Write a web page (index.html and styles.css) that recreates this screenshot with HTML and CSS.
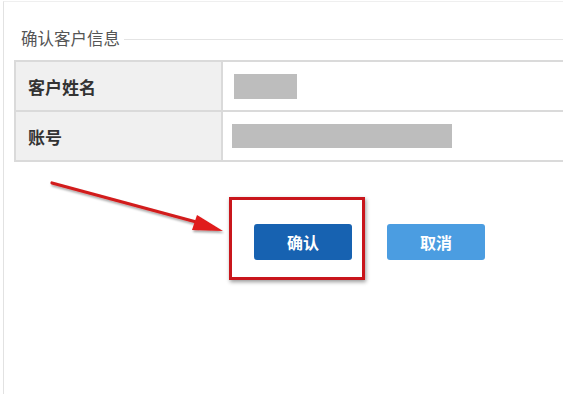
FILE: index.html
```html
<!DOCTYPE html>
<html lang="zh-CN">
<head>
<meta charset="utf-8">
<link rel="stylesheet" href="styles.css">
</head>
<body>
<div class="page">
  <div class="legend">
    <span class="legend-text">确认客户信息</span>
    <span class="legend-line"></span>
  </div>
  <div class="table">
    <div class="row">
      <div class="label">客户姓名</div>
      <div class="value"><span class="mask mask-short"></span></div>
    </div>
    <div class="row">
      <div class="label">账号</div>
      <div class="value"><span class="mask mask-long"></span></div>
    </div>
  </div>
  <div class="actions">
    <button class="btn btn-primary">确认</button>
    <button class="btn btn-light">取消</button>
  </div>
</div>
<div class="highlight"></div>
<svg class="arrow" width="563" height="394" viewBox="0 0 563 394">
  <defs>
    <filter id="sh" x="-20%" y="-20%" width="140%" height="140%">
      <feDropShadow dx="1" dy="2" stdDeviation="1.2" flood-color="#000" flood-opacity="0.35"/>
    </filter>
  </defs>
  <g filter="url(#sh)">
    <line x1="52" y1="183" x2="200" y2="223" stroke="#d21d1d" stroke-width="3.2" stroke-linecap="round"/>
    <polygon points="223,231 197,215 192,230" fill="#e01a1a"/>
  </g>
</svg>
</body>
</html>
```

FILE: styles.css
```css
html, body {
  margin: 0;
  padding: 0;
  background: #ffffff;
  width: 563px;
  height: 394px;
  overflow: hidden;
  font-family: "Noto Sans CJK SC", "Noto Sans", sans-serif;
}

.page {
  margin: 1px 0 0 3px;
  height: 393px;
  box-sizing: border-box;
  border-left: 1px solid #e2e2e2;
  border-top: 1px solid #efefef;
  padding: 0 0 0 10px;
}

.legend {
  display: flex;
  align-items: center;
  height: 36px;
  margin-top: 20px;
  padding-left: 7px;
}

.legend-text {
  font-size: 16.5px;
  color: #555;
  line-height: 20px;
  margin-top: -5px;
}

.legend-line {
  flex: 1;
  height: 1px;
  background: #e4e4e4;
  margin-left: 4px;
  margin-top: -2px;
}

.table {
  margin-top: 2px;
  border-top: 2px solid #dadada;
  border-left: 2px solid #dadada;
}

.row {
  display: flex;
  height: 48px;
  border-bottom: 2px solid #dadada;
}

.label {
  width: 193px;
  flex: none;
  background: #f0f0f0;
  border-right: 2px solid #dadada;
  padding-left: 12px;
  display: flex;
  align-items: center;
  font-size: 17px;
  font-weight: bold;
  color: #333;
}

.value {
  flex: 1;
  display: flex;
  align-items: center;
  padding-left: 9px;
}

.mask {
  display: block;
  background: #bdbdbd;
}

.mask-short {
  width: 63px;
  height: 25px;
  margin-left: 2px;
}

.mask-long {
  width: 220px;
  height: 24px;
}

.actions {
  display: flex;
  gap: 35px;
  margin-top: 62px;
  padding-left: 240px;
}

.btn {
  width: 98px;
  height: 36px;
  border: none;
  border-radius: 3px;
  color: #fff;
  font-family: "Noto Sans CJK SC", sans-serif;
  font-size: 16px;
  font-weight: bold;
  padding: 0;
}

.btn-primary {
  background: #1762b1;
}

.btn-light {
  background: #4b9de1;
}

.highlight {
  position: absolute;
  left: 229px;
  top: 197px;
  width: 130px;
  height: 77px;
  border: 3px solid #c9161c;
  box-shadow: 1px 2px 4px rgba(0, 0, 0, 0.4);
}

.arrow {
  position: absolute;
  left: 0;
  top: 0;
  pointer-events: none;
}
```
